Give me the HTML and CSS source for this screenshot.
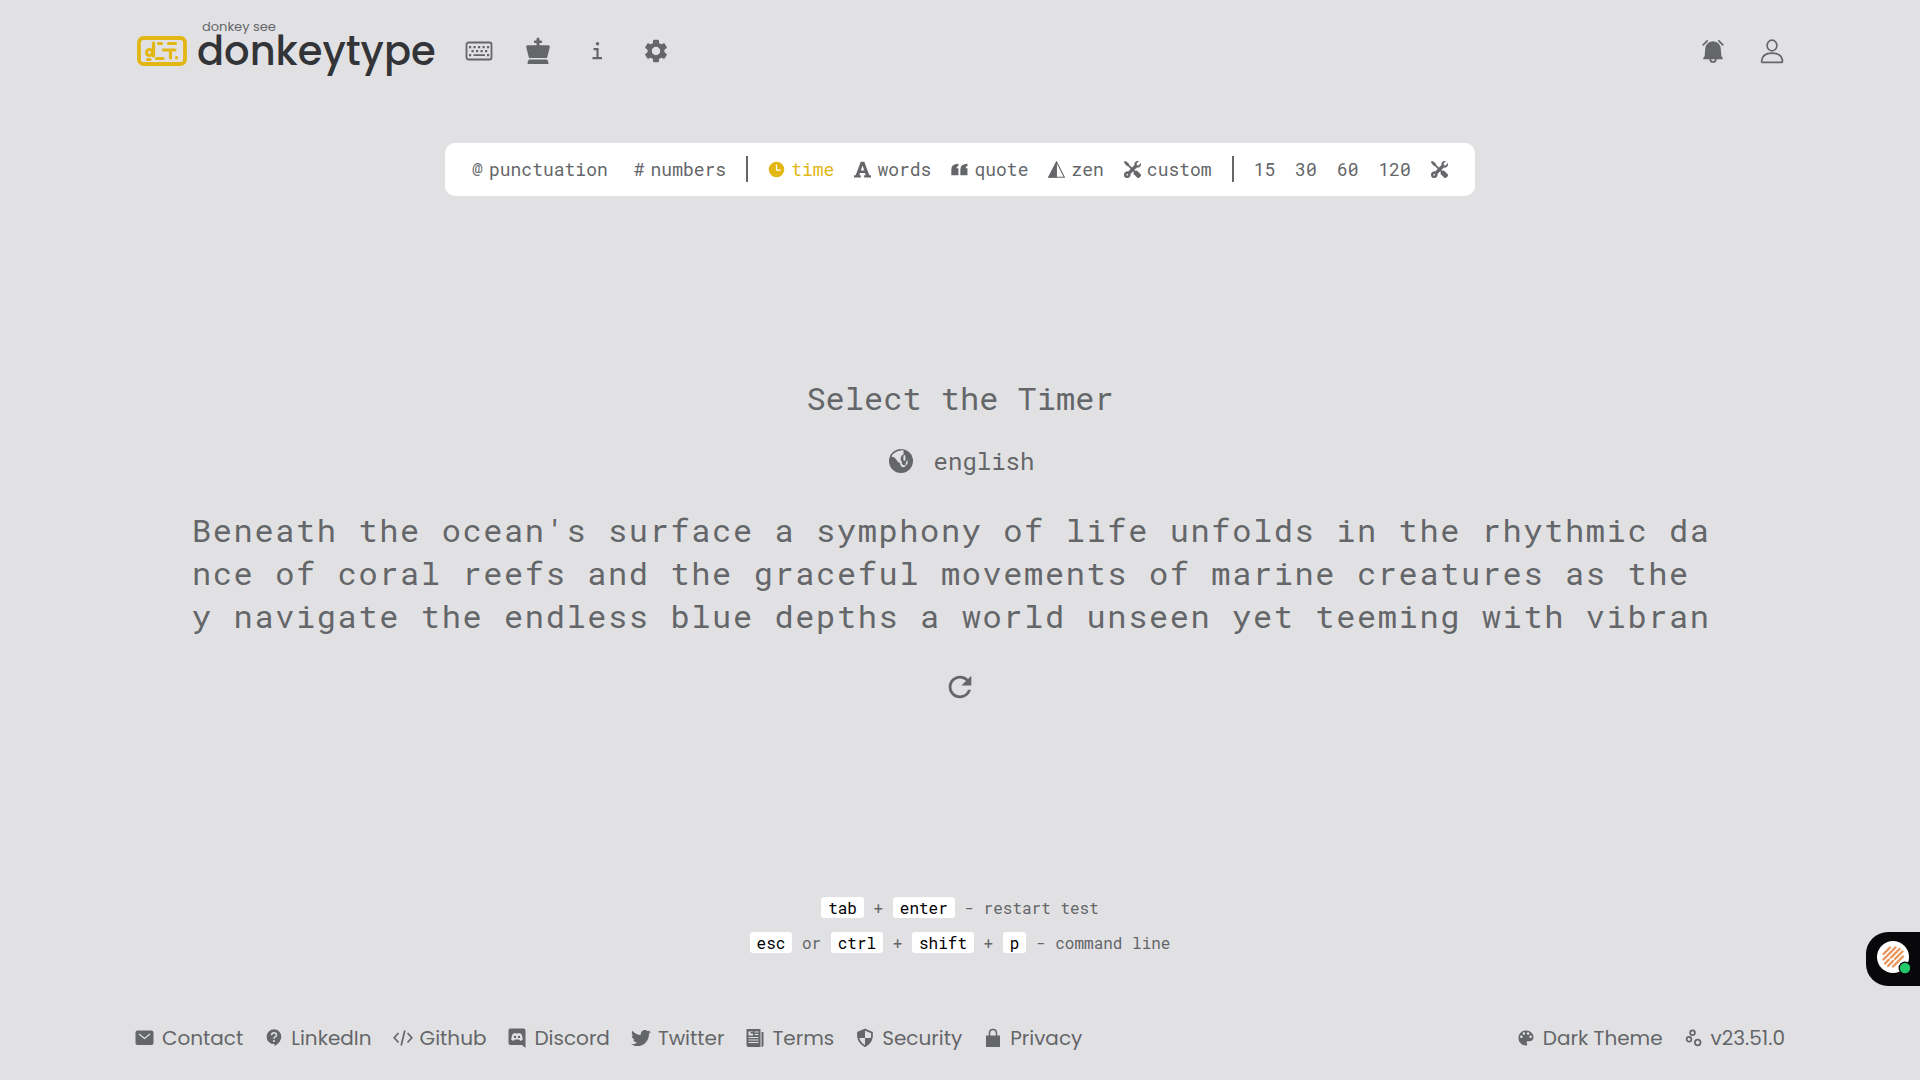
FILE: index.html
```html
<!DOCTYPE html>
<html lang="en">
<head>
<meta charset="utf-8">
<meta name="viewport" content="width=device-width, initial-scale=1">
<title>donkeytype</title>
<link rel="stylesheet" href="styles.css">
</head>
<body>
<svg class="sprite" aria-hidden="true">
  <symbol id="tools" viewBox="0 0 16 16"><path fill-rule="evenodd" stroke="currentColor" stroke-width=".4" d="M1 0 0 1l2.2 3.081a1 1 0 0 0 .815.419h.07a1 1 0 0 1 .708.293l2.675 2.675-2.617 2.654A3.003 3.003 0 0 0 0 13a3 3 0 1 0 5.878-.851l2.654-2.617.968.968-.305.914a1 1 0 0 0 .242 1.023l3.27 3.27a.997.997 0 0 0 1.414 0l1.586-1.586a.997.997 0 0 0 0-1.414l-3.27-3.27a1 1 0 0 0-1.023-.242L10.5 9.500l-.96-.96 2.68-2.643A3.005 3.005 0 0 0 16 3c0-.269-.035-.53-.102-.777l-2.14 2.141L12 4l-.364-1.757L13.777.102a3 3 0 0 0-3.675 3.68L7.462 6.460 4.793 3.793a1 1 0 0 1-.293-.707v-.071a1 1 0 0 0-.419-.814L1 0ZM3 12a1 1 0 1 0 0 2a1 1 0 0 0 0-2Z"/></symbol>
</svg>

<header class="header">
  <a class="brand" href="#">
    <svg class="brand-mark" viewBox="0 0 50 30" aria-hidden="true">
      <g fill="none" stroke="currentColor" stroke-width="3.200" stroke-linecap="round">
        <rect x="2" y="2" width="46" height="26" rx="4.500" stroke-width="3.800"/>
        <circle cx="12.500" cy="16.500" r="3"/>
        <path d="M16.500 7v13M21.500 7.500h3M31.500 7.500h7M26.500 14h11.500M33.500 14v8M10.500 23.500h2.500M19.500 22.500h6.500M39.500 21.500v.5"/>
      </g>
    </svg>
    <span class="brand-text">
      <span class="tagline">donkey see</span>
      <span class="brand-name">donkeytype</span>
    </span>
  </a>
  <nav class="tools" aria-label="Main">
    <button type="button" class="icon-button" aria-label="Start typing">
      <svg class="icon-28" viewBox="0 0 28 28"><rect x="1.500" y="5.500" width="25" height="17" rx="2" fill="none" stroke="currentColor" stroke-width="1.800"/><path fill="currentColor" d="M4 9h2.200v2.200H4zM8.500 9h2.200v2.200H8.500zM13 9h2.200v2.200H13zM17.500 9h2.200v2.200h-2.200zM22 9h2.200v2.200H22zM6.500 13h2.200v2.200H6.500zM11 13h2.200v2.200H11zM15.500 13h2.200v2.200h-2.200zM20 13h2.200v2.200H20zM4 17h2.200v2.200H4zM22 17h2.200v2.200H22zM8.500 17.200h11.500v1.800H8.500z"/></svg>
    </button>
    <button type="button" class="icon-button" aria-label="Leaderboard">
      <svg class="icon-28" viewBox="0 0 28 28"><path fill="currentColor" d="M12.500 2q0-1.500 1.500-1.500t1.500 1.500v1.500H17q1.200 0 1.200 1.300T17 6.100h-1.500v2.200H24q2.300 0 1.700 2.200L23 21H5L2.300 10.500Q1.700 8.300 4 8.300h8.500V6.100H11q-1.200 0-1.200-1.300T11 3.500h1.500zM5 22.600h18q1.500 1.500 1.500 4.400h-21q0-2.900 1.500-4.400z"/></svg>
    </button>
    <button type="button" class="icon-button" aria-label="About">
      <svg class="icon-28" viewBox="0 0 28 28"><circle cx="14.500" cy="6.800" r="1.700" fill="currentColor"/><path d="M10.500 12.200h4v9M9.500 21.200h9.500" fill="none" stroke="currentColor" stroke-width="2.200"/></svg>
    </button>
    <button type="button" class="icon-button" aria-label="Settings">
      <svg class="icon-28" viewBox="0 0 24 24"><path fill="currentColor" d="M19.140 12.940c.04-.3.06-.61.06-.94 0-.32-.02-.64-.07-.94l2.030-1.580c.18-.14.23-.41.12-.61l-1.920-3.320c-.12-.22-.37-.29-.59-.22l-2.390.96c-.5-.38-1.030-.7-1.620-.94l-.36-2.540c-.04-.24-.24-.41-.48-.41h-3.840c-.24 0-.43.17-.47.41l-.36 2.540c-.59.24-1.130.57-1.620.94l-2.390-.96c-.22-.08-.47 0-.59.22L2.740 8.870c-.12.21-.08.47.12.61l2.030 1.580c-.05.3-.09.63-.09.94s.02.64.07.94l-2.030 1.580c-.18.14-.23.41-.12.61l1.920 3.320c.12.22.37.29.59.22l2.390-.96c.5.38 1.030.7 1.620.94l.36 2.540c.05.24.24.41.48.41h3.840c.24 0 .44-.17.47-.41l.36-2.540c.59-.24 1.130-.56 1.620-.94l2.390.96c.22.08.47 0 .59-.22l1.920-3.320c.12-.22.07-.47-.12-.61l-2.010-1.580zM12 15.600c-1.980 0-3.600-1.620-3.600-3.600s1.620-3.600 3.600-3.600 3.600 1.620 3.600 3.600-1.620 3.600-3.600 3.600z"/></svg>
    </button>
  </nav>
  <div class="tools account">
    <button type="button" class="icon-button" aria-label="Notifications">
      <svg class="icon-28" viewBox="0 0 28 28"><path fill="currentColor" d="M14 4.300q7.200.4 7.800 7.700l.5 6.500q.2 1.200 1.400 2.300v1.400H4.300v-1.400q1.200-1.100 1.400-2.300l.5-6.500Q6.800 4.700 14 4.300z"/><path fill="none" stroke="currentColor" stroke-width="1.700" stroke-linecap="round" d="M11.200 22.500q.4 2.500 2.800 2.500t2.800-2.500M4.200 7.800l4-4M23.800 7.800l-4-4"/></svg>
    </button>
    <button type="button" class="icon-button" aria-label="Account">
      <svg class="icon-28" viewBox="0 0 28 28"><g fill="none" stroke="currentColor" stroke-width="1.700" stroke-linejoin="round"><ellipse cx="14" cy="8.500" rx="4.900" ry="5.300"/><path d="M3.500 24.500q.5-8.300 10.500-8.300t10.500 8.300q0 .8-.8.8H4.300q-.8 0-.8-.8z"/></g></svg>
    </button>
  </div>
</header>

<main class="main">
  <div class="config" role="toolbar" aria-label="Test settings">
    <button type="button" class="option option-wide"><span>@</span>punctuation</button>
    <button type="button" class="option"><span>#</span>numbers</button>
    <span class="divider"></span>
    <button type="button" class="option active" aria-pressed="true"><svg class="icon-16" viewBox="0 0 16 16"><circle cx="8" cy="8" r="7.300" fill="currentColor"/><path d="M8 3.500V8.600h4" fill="none" stroke="#fff" stroke-width="1.100"/></svg>time</button>
    <button type="button" class="option"><svg class="icon-16" viewBox="0 0 16 16"><path fill="currentColor" fill-rule="evenodd" d="M6.300.7h3.400l4.700 12.800H16v2H9.600v-2h1.500l-.8-2.300H5.700l-.8 2.300h1.500v2H0v-2h1.600zM8 4.300 6.400 9h3.200z"/></svg>words</button>
    <button type="button" class="option"><svg class="icon-16" viewBox="0 0 16 16"><path fill="currentColor" d="M7 2.500v2.200q-1.800.2-1.800 2.200H7v6.600H.3V8Q.3 2.700 7 2.500zM15.500 2.500v2.200q-1.800.2-1.800 2.200h1.800v6.600H8.800V8q0-5.300 6.700-5.500z"/></svg>quote</button>
    <button type="button" class="option"><svg class="icon-16" viewBox="0 0 16 16"><path fill="none" stroke="currentColor" d="M8 .8 15.400 15.300H.6z"/><path fill="currentColor" d="M8.400 0v15.500H.3z"/></svg>zen</button>
    <button type="button" class="option"><svg class="icon-16"><use href="#tools" fill="currentColor"/></svg>custom</button>
    <span class="divider"></span>
    <button type="button" class="option">15</button>
    <button type="button" class="option">30</button>
    <button type="button" class="option">60</button>
    <button type="button" class="option">120</button>
    <button type="button" class="option" aria-label="Custom time"><svg class="icon-16"><use href="#tools" fill="currentColor"/></svg></button>
  </div>

  <section class="test">
    <h1 class="prompt">Select the Timer</h1>
    <button type="button" class="language">
      <svg class="icon-24" viewBox="0 0 24 24"><circle cx="12" cy="12" r="12" fill="currentColor"/><path fill="#e1e1e3" d="M4 5Q8 1.300 14.500 1.200v4.300q-2.200.3-2.500 2.500l-.5 3 1.500 2q-1 1.500.8 3l3.700.8q-2 1.800-4.500 1.200-2-1.500-2.300-4.300-2-.3-3.300-3Q5.700 7.500 2.600 7.800 3 6 4 5zM14.500 6.500q1.500-1.200 1.900.4l.1 4.200q-1.300 1.400-2.200-.3zM17 13l1.800-2-.4 4.200-2 1z"/></svg>
      english
    </button>
    <p class="words">
      <span class="line">Beneath the ocean's surface a symphony of life unfolds in the rhythmic da</span>
      <span class="line">nce of coral reefs and the graceful movements of marine creatures as the</span>
      <span class="line">y navigate the endless blue depths a world unseen yet teeming with vibran</span>
    </p>
    <button type="button" class="icon-button restart" aria-label="Restart test">
      <svg class="icon-34" viewBox="0 0 24 24"><path fill="currentColor" d="M17.650 6.350A7.958 7.958 0 0 0 12 4c-4.420 0-7.990 3.580-7.990 8s3.570 8 7.990 8c3.730 0 6.840-2.550 7.730-6h-2.080A5.990 5.990 0 0 1 12 18c-3.310 0-6-2.690-6-6s2.690-6 6-6c1.660 0 3.140.69 4.220 1.780L13 11h7V4l-2.350 2.350z"/></svg>
    </button>
  </section>

  <div class="hints">
    <p><kbd>tab</kbd> + <kbd>enter</kbd> - restart test</p>
    <p><kbd>esc</kbd> or <kbd>ctrl</kbd> + <kbd>shift</kbd> + <kbd>p</kbd> - command line</p>
  </div>
</main>

<footer class="footer">
  <nav class="links" aria-label="Footer">
    <a href="#"><svg class="icon-20" viewBox="0 0 20 20"><rect x="0.500" y="2.500" width="18" height="14.500" rx="2" fill="currentColor"/><path d="m4 6 5.500 4.500L15 6" fill="none" stroke="#e1e1e3" stroke-width="1.200"/></svg>Contact</a>
    <a href="#"><svg class="icon-20" viewBox="0 0 20 20"><path fill="currentColor" d="M10 1.300a7.300 7.300 0 0 1 7.300 7.300q0 5.600-6.800 9.700v-2.200H10A7.400 7.400 0 0 1 10 1.300z"/><path d="M7.600 7.200Q7.700 4.800 10 4.800t2.400 2.100q0 1.200-1.300 2-1.100.6-1.100 1.900" fill="none" stroke="#e1e1e3" stroke-width="1.500"/><circle cx="10" cy="13" r="1" fill="#e1e1e3"/></svg>LinkedIn</a>
    <a href="#"><svg class="icon-20" viewBox="0 0 20 20"><path d="M5.500 5 1.200 9.800l4.300 4.700M14.500 5l4.300 4.800-4.300 4.700M11.800 2.500 8.200 17.500" fill="none" stroke="currentColor" stroke-width="1.700"/></svg>Github</a>
    <a href="#"><svg class="icon-20" viewBox="0 0 20 20"><path fill="currentColor" d="M3.500.5h13q2 0 2 2V20l-3.500-3H3.500q-2 0-2-2V2.500q0-2 2-2z"/><path fill="#e1e1e3" fill-rule="evenodd" d="M4.200 11.500q.2-3.500 1.700-5.700 1.200-.8 2.500-.9l.5.700h2.200l.5-.7q1.300.1 2.500.9 1.500 2.200 1.700 5.700-1 1.200-2.700 1.300l-.8-1.200H7.700l-.8 1.200q-1.700-.1-2.700-1.300zM8 7.700a1.200 1.200 0 1 0 0 2.400 1.200 1.200 0 0 0 0-2.400zm4 0a1.200 1.200 0 1 0 0 2.400 1.200 1.200 0 0 0 0-2.400z"/></svg>Discord</a>
    <a href="#"><svg class="icon-20" viewBox="0 0 512 512"><path fill="currentColor" d="M459.370 151.716c.325 4.548.325 9.097.325 13.645 0 138.720-105.583 298.558-298.558 298.558-59.452 0-114.680-17.219-161.137-47.106 8.447.974 16.568 1.299 25.340 1.299 49.055 0 94.213-16.568 130.274-44.832-46.132-.975-84.792-31.188-98.112-72.772 6.498.974 12.995 1.624 19.818 1.624 9.421 0 18.843-1.300 27.614-3.573-48.081-9.747-84.143-51.980-84.143-102.985v-1.299c13.969 7.797 30.214 12.670 47.431 13.319-28.264-18.843-46.781-51.005-46.781-87.391 0-19.492 5.197-37.360 14.294-52.954 51.655 63.675 129.300 105.258 216.365 109.807-1.624-7.797-2.599-15.918-2.599-24.040 0-57.828 46.782-104.934 104.934-104.934 30.213 0 57.502 12.670 76.670 33.137 23.715-4.548 46.456-13.320 66.599-25.340-7.798 24.366-24.366 44.833-46.132 57.827 21.117-2.273 41.584-8.122 60.426-16.243-14.292 20.791-32.161 39.308-52.628 54.253z"/></svg>Twitter</a>
    <a href="#"><svg class="icon-20" viewBox="0 0 20 20"><path fill="currentColor" d="M1.500 1h14v18h-12q-2 0-2-2zM16.500 4h2v13q0 2-2 2z"/><path fill="#e1e1e3" d="M3.500 3.500h4.500v4H3.500zM9.500 3.500h4v1h-4zM9.500 6h4v1h-4zM3.500 9h10v1h-10zM3.500 11.500h10v1h-10zM3.500 14h10v1h-10z"/><path fill="currentColor" d="M5.500 4h2.500v1.500H5.500z"/></svg>Terms</a>
    <a href="#"><svg class="icon-20" viewBox="0 0 20 20"><path d="M10 1.700 17 4.700Q18 14 10 18.200 2 14 3 4.700z" fill="none" stroke="currentColor" stroke-width="1.800" stroke-linejoin="round"/><path fill="currentColor" d="M10 2v8H3Q2.500 7.500 3 4.700zM10 10h7q-1 5.500-7 8.500z"/></svg>Security</a>
    <a href="#"><svg class="icon-20" viewBox="0 0 20 20"><path d="M6.500 8V5Q6.500 1.500 10 1.500T13.500 5v3" fill="none" stroke="currentColor" stroke-width="1.500"/><path fill="currentColor" d="M3 7.500h14V19H3z"/></svg>Privacy</a>
  </nav>
  <div class="links">
    <a href="#"><svg class="icon-20" viewBox="0 0 24 24"><path fill="currentColor" d="M12 3c-4.970 0-9 4.030-9 9s4.030 9 9 9c.83 0 1.500-.67 1.500-1.500 0-.39-.15-.74-.39-1.010-.23-.26-.38-.61-.38-.99 0-.83.67-1.500 1.500-1.500H16c2.760 0 5-2.240 5-5 0-4.420-4.030-8-9-8zm-5.500 9c-.83 0-1.500-.67-1.500-1.500S5.670 9 6.500 9 8 9.670 8 10.500 7.330 12 6.500 12zm3-4C8.670 8 8 7.330 8 6.500S8.670 5 9.500 5s1.500.67 1.500 1.500S10.330 8 9.500 8zm5 0c-.83 0-1.500-.67-1.500-1.500S13.670 5 14.500 5s1.500.67 1.500 1.500S15.330 8 14.500 8zm3 4c-.83 0-1.500-.67-1.500-1.500S16.670 9 17.500 9s1.500.67 1.500 1.500-.67 1.500-1.500 1.500z"/></svg>Dark Theme</a>
    <a href="#"><svg class="icon-20" viewBox="0 0 20 20"><g fill="none" stroke="currentColor" stroke-width="1.700"><circle cx="8.500" cy="4.700" r="2.400"/><circle cx="5" cy="11.200" r="2.400"/><circle cx="13.700" cy="14.500" r="2.800"/></g></svg>v23.51.0</a>
  </div>
</footer>

<button type="button" class="widget" aria-label="Open assistant">
  <svg class="widget-face" viewBox="0 0 36 36"><circle cx="16" cy="16" r="16" fill="#fff"/><g stroke="#e8955a" stroke-width="2.400" stroke-linecap="round"><path d="M6.500 13 13 6.500M6.500 18.500 18.500 6.500M8 22.500l4-4M14 16.500l8.500-8.500M11 25l5-5M18 18l7.500-7.500M16 25.500l10-10"/></g><circle cx="28" cy="27" r="6.500" fill="#08080a"/><circle cx="28" cy="27" r="5.200" fill="#22c96b"/></svg>
</button>
</body>
</html>
```
FILE: styles.css
```css
:root {
  --bg: #e1e1e3;
  --sub: #646669;
  --text: #323437;
  --main: #e2b714;
  --mono: "Roboto Mono", "Liberation Mono", monospace;
  --sans: "Poppins", "Inter", sans-serif;
}

* {
  box-sizing: border-box;
}

body {
  margin: 0;
  min-height: 100vh;
  display: flex;
  flex-direction: column;
  background: var(--bg);
  color: var(--sub);
  font-family: var(--mono);
}

h1,
p {
  margin: 0;
  font-weight: 400;
}

a {
  color: inherit;
  text-decoration: none;
}

button {
  padding: 0;
  border: 0;
  background: none;
  color: inherit;
  font: inherit;
  cursor: pointer;
}

svg {
  display: block;
  flex: none;
}

.sprite {
  display: none;
}

.icon-16 { width: 17px; height: 17px; }
.icon-20 { width: 20px; height: 20px; }
.icon-24 { width: 24px; height: 24px; }
.icon-28 { width: 28px; height: 28px; }
.icon-34 { width: 34px; height: 34px; }

.header {
  display: flex;
  align-items: center;
  padding: 19px 134px 0 137px;
}

.brand {
  display: flex;
  align-items: center;
  gap: 10px;
  font-family: var(--sans);
}

.brand-mark {
  width: 50px;
  height: 30px;
  color: var(--main);
}

.brand-text {
  display: flex;
  flex-direction: column;
  padding-bottom: 16px;
}

.tagline {
  padding-left: 5px;
  font-size: 13px;
  line-height: 16px;
}

.brand-name {
  color: var(--text);
  font-size: 40px;
  font-weight: 500;
  line-height: 32px;
}

.tools {
  display: flex;
  gap: 31px;
  margin-left: 29px;
}

.account {
  margin-left: auto;
}

.icon-button {
  display: grid;
  place-items: center;
}

.main {
  flex: 1;
  display: flex;
  flex-direction: column;
  align-items: center;
}

.config {
  display: flex;
  align-items: center;
  gap: 20px;
  margin-top: 60px;
  padding: 0 27px 1px;
  min-height: 53px;
  border-radius: 10px;
  background: #fff;
  font-size: 18px;
}

.option {
  display: flex;
  align-items: center;
  gap: 6px;
}

.option-wide {
  margin-right: 6px;
}

.active {
  color: var(--main);
}

.divider {
  width: 2px;
  height: 26px;
  background: var(--sub);
}

.test {
  flex: 1;
  width: 80%;
  display: flex;
  flex-direction: column;
  align-items: center;
  justify-content: center;
  padding-bottom: 12px;
}

.prompt {
  font-size: 32px;
  line-height: 42px;
}

.language {
  display: flex;
  align-items: center;
  gap: 21px;
  margin-top: 26px;
  padding-left: 3px;
  font-size: 24px;
  line-height: 32px;
}

.words {
  width: 100%;
  margin-top: 31px;
  font-size: 32px;
  line-height: 43px;
  letter-spacing: 0.05em;
}

.line {
  display: block;
}

.restart {
  margin-top: 33px;
}

.hints {
  display: grid;
  gap: 14px;
  font-size: 16px;
  line-height: 21px;
  text-align: center;
}

kbd {
  display: inline-block;
  padding: 0 7px;
  border-radius: 3px;
  background: #fff;
  color: #000;
  font: inherit;
}

.footer {
  display: flex;
  justify-content: space-between;
  margin-top: 69px;
  padding: 0 135px 26px;
  font-family: var(--sans);
  font-size: 20px;
  line-height: 32px;
}

.links {
  display: flex;
  gap: 21px;
}

.links a {
  display: flex;
  align-items: center;
  gap: 7px;
}

.widget {
  position: fixed;
  right: 0;
  bottom: 94px;
  width: 54px;
  height: 54px;
  padding-left: 11px;
  border-radius: 22px 0 0 22px;
  background: #08080a;
}

.widget-face {
  width: 36px;
  height: 36px;
}
```
